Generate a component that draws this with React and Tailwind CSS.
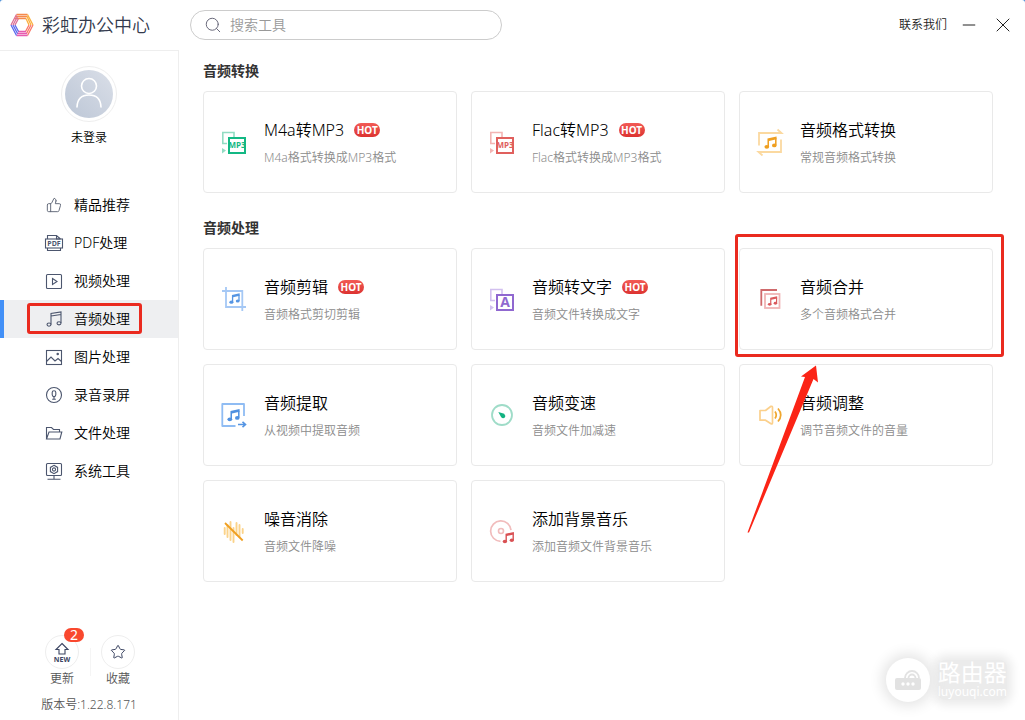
import React, { useState } from 'react';
import { Minus, X, Search, Star, ThumbsUp } from 'lucide-react';

// two-beam music note, drawn in a 12x12 space
function Note({ x, y, size = 12, color }) {
    return (
        <g transform={`translate(${x} ${y}) scale(${size / 12})`} fill={color}>
            <path d="M3.2 2.2 L11.6 0.4 V3 L4.6 4.5 V10 H3.2 Z" />
            <path d="M10.2 2 H11.6 V8.6 H10.2 Z" />
            <ellipse cx="2.6" cy="10" rx="2.2" ry="1.7" />
            <ellipse cx="9.5" cy="8.7" rx="2.1" ry="1.7" />
        </g>
    );
}

function ConvertIcon({ label, light, dark, size }) {
    return (
        <svg className="h-7 w-7 shrink-0" viewBox="0 0 28 28" fill="none">
            <path d="M14 9 V4.5 H2.8 V15.5 H7" stroke={light} strokeWidth="1.6" />
            <path d="M2 20 L6 22.5 L2 25.5 Z" fill={light} />
            <rect x="9" y="10" width="16" height="15" stroke={dark} strokeWidth="2" fill="#fff" />
            <text x="17" y={size > 8 ? 22 : 20} fontSize={size} fontWeight="700" textAnchor="middle" fill={dark} fontFamily="Open Sans, sans-serif">{label}</text>
        </svg>
    );
}

function FormatIcon() {
    return (
        <svg className="h-7 w-7 shrink-0" viewBox="0 0 28 28" fill="none">
            <g stroke="#fbd9a0" strokeWidth="1.8">
                <path d="M3 17.5 V5 H25.5 L21.5 1.5" />
                <path d="M25 11.5 V24 H2.5 L6.5 27.5" />
            </g>
            <Note x={8} y={8} size={13} color="#ef9f20" />
        </svg>
    );
}

function CropIcon() {
    return (
        <svg className="h-7 w-7 shrink-0" viewBox="0 0 28 28" fill="none">
            <path d="M6 2 V22 H26 M2 6 H22.3 V26" stroke="#a5c8f5" strokeWidth="1.8" />
            <Note x={9} y={8} size={11} color="#5595e3" />
        </svg>
    );
}

function ExtractIcon() {
    return (
        <svg className="h-7 w-7 shrink-0" viewBox="0 0 28 28" fill="none">
            <path d="M15.5 25 H2.3 V3 H24 V15" stroke="#8fbcf3" strokeWidth="1.8" strokeLinejoin="round" />
            <path d="M18 23.5 H25.5 M22.5 20.8 L25.5 23.5 L22.5 26.2" stroke="#5595e3" strokeWidth="1.6" />
            <Note x={7} y={7.5} size={13} color="#4f90e0" />
        </svg>
    );
}

function SpeedIcon() {
    return (
        <svg className="h-7 w-7 shrink-0" viewBox="0 0 28 28" fill="none">
            <circle cx="14" cy="14" r="10" stroke="#9fdcc8" strokeWidth="1.8" />
            <path d="M10.3 11 L16.2 12.8 Q18 15 16.8 16.6 Q15 18 13.2 16.2 Z" fill="#12b281" />
        </svg>
    );
}

function MergeIcon() {
    return (
        <svg className="h-7 w-7 shrink-0" viewBox="0 0 28 28" fill="none">
            <path d="M5.3 20.7 V5 H21" stroke="#cf6a6c" strokeWidth="1.8" />
            <rect x="9" y="9" width="14.5" height="14" stroke="#f0b5b6" strokeWidth="1.8" />
            <Note x={11.5} y={11} size={10} color="#da5a5d" />
        </svg>
    );
}

function VolumeIcon() {
    return (
        <svg className="h-7 w-7 shrink-0" viewBox="0 0 28 28" fill="none">
            <path d="M4 9.5 H9.5 L15 5.3 Q16.5 5 16.5 6.5 V21.5 Q16.5 23.4 15 22.8 L9.5 19.2 H4 Z" stroke="#fbd08c" strokeWidth="1.7" strokeLinejoin="round" />
            <path d="M19 10.5 Q21.5 14 19 17.5 M22 7.5 Q27.5 14 22 20.5" stroke="#f0a62e" strokeWidth="1.7" />
        </svg>
    );
}

function NoiseIcon() {
    return (
        <svg className="h-7 w-7 shrink-0" viewBox="0 0 28 28" fill="none">
            <path d="M4.7 11 V17 M7.5 8 V20 M10.5 5 V23 M13.5 11 V25 M16.5 6 V18 M19.5 8 V20 M22.7 12 V16" stroke="#fbd38a" strokeWidth="1.9" strokeLinecap="round" />
            <path d="M5 6 L22.7 23.5" stroke="#ef9f20" strokeWidth="1.8" />
        </svg>
    );
}

function DiscIcon() {
    return (
        <svg className="h-7 w-7 shrink-0" viewBox="0 0 28 28" fill="none">
            <path d="M12.5 24.3 A10.2 10.2 0 1 1 23 13.2" stroke="#f1bcbc" strokeWidth="1.7" />
            <circle cx="13" cy="14" r="2.5" stroke="#f1bcbc" strokeWidth="1.6" />
            <Note x={14.3} y={14.5} size={12} color="#d95154" />
        </svg>
    );
}

function NavSvg({ children }) {
    return (
        <svg className="h-5 w-5 shrink-0" viewBox="0 0 20 20" fill="none" stroke="#4c566e" strokeWidth="1.1">
            {children}
        </svg>
    );
}

const navItems = [
    { name: '精品推荐', icon: <span className="flex w-5 justify-center"><ThumbsUp size={16} strokeWidth={1.4} color="#5b6373" /></span> },
    {
        name: 'PDF处理',
        icon: (
            <NavSvg>
                <path d="M3.5 6 V2.5 H12.5 L16.5 6 M12.5 2.5 V6 H16.5 M3.5 15 V17.5 H16.5 V15" />
                <rect x="1.5" y="6" width="17" height="9" />
                <text x="10" y="13.2" fontSize="7" fontWeight="700" textAnchor="middle" stroke="none" fill="#4c566e" fontFamily="Open Sans, sans-serif">PDF</text>
            </NavSvg>
        ),
    },
    {
        name: '视频处理',
        icon: (
            <NavSvg>
                <rect x="2.5" y="3.5" width="15" height="14" rx="1" />
                <path d="M8.5 7.5 L13 10.5 L8.5 13.5 Z" />
            </NavSvg>
        ),
    },
    {
        name: '音频处理',
        marked: true,
        icon: (
            <NavSvg>
                <path d="M7 15.5 V4.5 L17 3 V14 M7 7 L17 5.5" />
                <ellipse cx="5" cy="15.6" rx="2" ry="1.6" />
                <ellipse cx="15" cy="14.3" rx="2" ry="1.6" />
            </NavSvg>
        ),
    },
    {
        name: '图片处理',
        icon: (
            <NavSvg>
                <rect x="2.5" y="3.5" width="15" height="14" />
                <path d="M2.5 14.5 L7 10 L11 14 L14 11.5 L17.5 14.5" />
                <circle cx="13.7" cy="7" r="0.7" fill="#4c566e" />
            </NavSvg>
        ),
    },
    {
        name: '录音录屏',
        icon: (
            <NavSvg>
                <circle cx="10" cy="10" r="7.5" />
                <rect x="8.2" y="5.8" width="3.6" height="5.8" rx="1.8" />
                <path d="M10 11.6 V14.2 M8.2 14.2 H11.8" />
            </NavSvg>
        ),
    },
    {
        name: '文件处理',
        icon: (
            <NavSvg>
                <path d="M2.5 16 V4.5 H7.5 L9.5 6.5 H15.5 V9 M2.5 16 L5 9 H17.8 L16 16 Z" />
            </NavSvg>
        ),
    },
    {
        name: '系统工具',
        icon: (
            <NavSvg>
                <rect x="2.5" y="2.5" width="15" height="12" rx="1" />
                <path d="M10 14.5 V18 M3.5 18.3 H16.5" />
                <path d="M10 4.3 L13.6 6.4 V10.6 L10 12.7 L6.4 10.6 V6.4 Z" />
                <circle cx="10" cy="8.5" r="1.6" />
            </NavSvg>
        ),
    },
];

const sections = [
    {
        title: '音频转换',
        tools: [
            { name: 'M4a转MP3', desc: 'M4a格式转换成MP3格式', hot: true, icon: <ConvertIcon label="MP3" size={8} light="#92dcc3" dark="#13b884" /> },
            { name: 'Flac转MP3', desc: 'Flac格式转换成MP3格式', hot: true, icon: <ConvertIcon label="MP3" size={8} light="#f3b5b4" dark="#e0605d" /> },
            { name: '音频格式转换', desc: '常规音频格式转换', icon: <FormatIcon /> },
        ],
    },
    {
        title: '音频处理',
        tools: [
            { name: '音频剪辑', desc: '音频格式剪切剪辑', hot: true, icon: <CropIcon /> },
            { name: '音频转文字', desc: '音频文件转换成文字', hot: true, icon: <ConvertIcon label="A" size={14} light="#d2c0ef" dark="#9068d0" /> },
            { name: '音频合并', desc: '多个音频格式合并', marked: true, icon: <MergeIcon /> },
            { name: '音频提取', desc: '从视频中提取音频', icon: <ExtractIcon /> },
            { name: '音频变速', desc: '音频文件加减速', icon: <SpeedIcon /> },
            { name: '音频调整', desc: '调节音频文件的音量', icon: <VolumeIcon /> },
            { name: '噪音消除', desc: '音频文件降噪', icon: <NoiseIcon /> },
            { name: '添加背景音乐', desc: '添加音频文件背景音乐', icon: <DiscIcon /> },
        ],
    },
];

function Logo() {
    return (
        <svg className="h-6 w-6" viewBox="0 0 24 24" fill="none" strokeWidth="1.3">
            <path d="M6.5 1.5 H17.5 M5.5 3.5 H17.5 M5 5.5 H16" stroke="#f58a4c" />
            <path d="M17.5 1.5 L23 12 M17 3.5 L21 12 M16 5.5 L19 12" stroke="#fbb03f" />
            <path d="M23 12 L17.5 22.5 M21 12 L16.5 20.5 M19 12 L15.5 18.5" stroke="#f9786a" />
            <path d="M17.5 22.5 H6.5 M17 20.5 H7 M16 18.5 H8" stroke="#e65cb0" />
            <path d="M6.5 22.5 L1 12 M7.5 20.5 L3 12 M8.5 18.5 L5 12" stroke="#5a68ee" />
            <path d="M1 12 L6.5 1.5 M3 12 L7.5 3.5 M5 12 L8.5 5.5" stroke="#dd6f96" />
        </svg>
    );
}

function ToolCard({ tool }) {
    return (
        <button type="button" className="relative flex h-[102px] items-center gap-4 rounded border border-[#e9e9e9] bg-white pl-4 text-left">
            {tool.icon}
            <span className="flex flex-col gap-[5px] pt-[3px]">
                <span className="flex items-center gap-[10px] text-base leading-6 text-black">
                    {tool.name}
                    {tool.hot && (
                        <span className="flex h-[14px] w-[26px] items-center justify-center rounded-full bg-linear-to-b from-[#f25a55] to-[#dc3230] text-[10px] font-bold text-white">HOT</span>
                    )}
                </span>
                <span className="text-xs leading-[22px] text-[#8c8c8c]">{tool.desc}</span>
            </span>
            {tool.marked && (
                <>
                    <span className="absolute -top-[15px] -right-3 -bottom-2 -left-[5px] z-10 rounded-[3px] border-3 border-[#ea2a1f]"></span>
                    <svg className="absolute top-[116px] left-[7px] z-10 h-[168px] w-[72px]" viewBox="0 0 72 168">
                        <path d="M69 0.5 L54 11.5 L58 12 L0.5 167.5 L2 167.5 L66.5 14 L71 17.5 Z" fill="#fb2416" />
                    </svg>
                </>
            )}
        </button>
    );
}

function Watermark() {
    return (
        <div className="absolute right-[18px] bottom-[18px] flex items-center gap-2 font-normal text-white">
            <span className="z-10 flex h-11 w-11 items-center justify-center rounded-full bg-white shadow-[0_0_14px_4px_#e4e4e4]">
                <svg className="h-7 w-7" viewBox="0 0 28 28" fill="none">
                    <rect x="1" y="12" width="26" height="12" rx="2" fill="#e2e2e2" />
                    <path d="M11 12 A7 7 0 0 1 25 12 M14.5 12 A3.5 3.5 0 0 1 21.5 12" stroke="#e2e2e2" strokeWidth="1.8" />
                    <g fill="#fff">
                        <circle cx="9" cy="18" r="1.7" />
                        <circle cx="14" cy="18" r="1.7" />
                        <circle cx="19" cy="18" r="1.7" />
                    </g>
                </svg>
            </span>
            <span className="flex flex-col rounded-lg bg-[#ebebeb] shadow-[0_0_10px_5px_#ebebeb]">
                <span className="text-[23px] leading-6">路由器</span>
                <span className="text-xs leading-4">luyouqi.com</span>
            </span>
        </div>
    );
}

function App() {
    const [active, setActive] = useState('音频处理');
    const [keyword, setKeyword] = useState('');

    return (
        <div className="bg-[#4a8fd8] font-['Noto_Sans','Noto_Sans_CJK_SC',sans-serif] font-[350]">
            <div className="relative flex min-h-screen flex-col rounded-t-[3px] bg-white">
                <header className="flex h-[50px] items-center">
                    <div className="flex w-[190px] items-center gap-2 pl-[10px]">
                        <Logo />
                        <h1 className="text-lg text-[#333a4d]">彩虹办公中心</h1>
                    </div>
                    <label className="flex h-[30px] w-[312px] items-center gap-2 rounded-full border border-[#ccc] pl-[13px]">
                        <Search size={18} strokeWidth={1.3} color="#667" />
                        <input
                            type="text"
                            aria-label="搜索工具"
                            placeholder="搜索工具"
                            value={keyword}
                            onChange={(e) => setKeyword(e.target.value)}
                            className="w-60 text-sm outline-none placeholder:text-[#999]"
                        />
                    </label>
                    <div className="ml-auto flex items-center gap-3 pr-[10px] text-xs text-[#222]">
                        <a href="#contact">联系我们</a>
                        <button type="button" aria-label="最小化"><Minus size={20} strokeWidth={1.2} /></button>
                        <button type="button" aria-label="关闭"><X size={24} strokeWidth={1} /></button>
                    </div>
                </header>

                <div className="flex flex-1">
                    <aside className="flex w-[179px] shrink-0 flex-col border-t border-r border-[#eee]">
                        <div className="flex flex-col items-center gap-[6px] pt-[15px]">
                            <button type="button" aria-label="登录" className="flex h-14 w-14 items-center justify-center rounded-full border border-[#eee]">
                                <svg className="h-12 w-12 rounded-full bg-linear-to-tr from-[#bcc6d6] to-[#dadfe8]" viewBox="0 0 48 48" fill="none" stroke="#fff" strokeWidth="1.6" strokeLinecap="round">
                                    <circle cx="24" cy="16" r="7.5" />
                                    <path d="M12 37 Q12.5 25 24 25 Q35.5 25 36 37" />
                                </svg>
                            </button>
                            <span className="text-xs leading-5 text-black">未登录</span>
                        </div>

                        <nav className="mt-[38px]">
                            {navItems.map((item) => (
                                <a
                                    key={item.name}
                                    href="#tools"
                                    onClick={() => setActive(item.name)}
                                    className={`relative flex h-[38px] items-center gap-[10px] border-l-4 pl-10 text-sm text-black ${active === item.name ? 'border-[#4290f7] bg-[#eeeff1]' : 'border-transparent'}`}
                                >
                                    {item.icon}
                                    {item.name}
                                    {item.marked && <span className="absolute top-[3px] right-9 bottom-1 left-[23px] rounded-[3px] border-3 border-[#ea2a1f]"></span>}
                                </a>
                            ))}
                        </nav>

                        <div className="mt-auto pb-[5px] text-xs leading-5 text-[#555]">
                            <div className="flex items-center justify-center pl-[2px]">
                                <button type="button" className="relative flex w-14 flex-col items-center">
                                    <span className="flex h-[34px] w-[34px] items-center justify-center rounded-full border border-[#eee]">
                                        <svg className="h-5 w-5" viewBox="0 0 20 20" fill="none" stroke="#3d4663" strokeWidth="1.1">
                                            <path d="M10 1.5 L16 7.5 H13 V12 H7 V7.5 H4 Z" />
                                            <text x="10" y="19.5" fontSize="7" fontWeight="700" textAnchor="middle" stroke="none" fill="#3d4663" fontFamily="Open Sans, sans-serif">NEW</text>
                                        </svg>
                                    </span>
                                    <span>更新</span>
                                    <span className="absolute -top-[7px] left-[30px] flex h-[14px] w-5 items-center justify-center rounded-full bg-[#f9482e] text-sm font-normal text-white">2</span>
                                </button>
                                <span className="-mr-px h-7 w-px bg-[#f5f5f5]"></span>
                                <button type="button" className="flex w-14 flex-col items-center">
                                    <span className="flex h-[34px] w-[34px] items-center justify-center rounded-full border border-[#eee]">
                                        <Star size={16} strokeWidth={1.5} color="#3d4663" />
                                    </span>
                                    <span>收藏</span>
                                </button>
                            </div>
                            <p className="mt-[6px] text-center">版本号:1.22.8.171</p>
                        </div>
                    </aside>

                    <main className="flex-1 pt-[11px] pr-8 pl-6">
                        {sections.map((section) => (
                            <section key={section.title} className="mb-[25px]">
                                <h2 className="mb-[10px] text-sm leading-5 font-bold text-[#333]">{section.title}</h2>
                                <div className="grid grid-cols-3 gap-[14px]">
                                    {section.tools.map((tool) => (
                                        <ToolCard key={tool.name} tool={tool} />
                                    ))}
                                </div>
                            </section>
                        ))}
                    </main>
                </div>
                <Watermark />
            </div>
        </div>
    );
}

export default App;
